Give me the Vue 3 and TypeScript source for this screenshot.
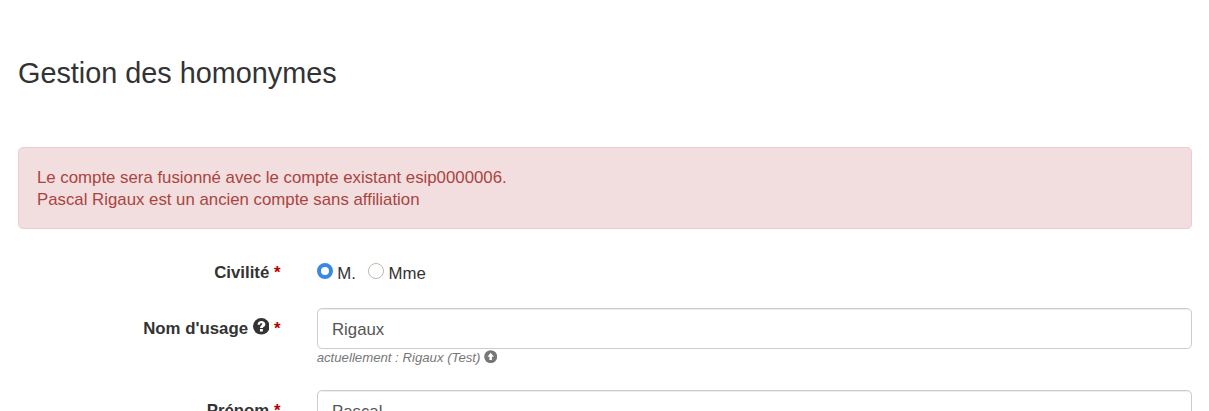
<script setup lang="ts">
import { ref } from 'vue'

const civility = ref<string>('M.')
const civilities: string[] = ['M.', 'Mme']
const lastName = ref<string>('Rigaux')
const firstName = ref<string>('Pascal')
</script>

<template>
  <main class="page">
    <h3 class="title">Gestion des homonymes</h3>

    <div class="alert" role="alert">
      <div>Le compte sera fusionné avec le compte existant esip0000006.</div>
      <div>Pascal Rigaux est un ancien compte sans affiliation</div>
    </div>

    <form class="form" @submit.prevent>
      <div class="row civility">
        <span class="label">Civilité <span class="required">*</span></span>
        <div class="radios">
          <label v-for="c in civilities" :key="c" class="radio">
            <input v-model="civility" type="radio" name="civility" :value="c" />
            <span>{{ c }}</span>
          </label>
        </div>
      </div>

      <div class="row usual-name">
        <label class="label" for="lastName">Nom d'usage
          <svg class="help" viewBox="0 0 16 16" aria-hidden="true">
            <circle cx="8" cy="8" r="8" fill="currentColor" />
            <path d="M4.4 6.5C4.4 4.2 5.9 2.8 8.1 2.8s3.8 1.2 3.8 3.2c0 1.4-.8 2-1.5 2.5-.6.4-.8.6-.8 1.1H6.8c0-1.5.6-2.1 1.3-2.6.6-.4.9-.6.9-1.1 0-.5-.4-.8-1-.8-.8 0-1.2.5-1.2 1.4zM6.7 10.6h2.8V13H6.7z" fill="#fff" />
          </svg>
          <span class="required"> *</span></label>
        <div class="field">
          <input id="lastName" v-model="lastName" class="control" type="text" />
          <div class="hint">
            <span>actuellement : Rigaux (Test)</span>
            <svg class="restore" viewBox="0 0 14 14" aria-hidden="true">
              <circle cx="7" cy="7" r="6.8" fill="currentColor" />
              <path d="M7 2.8 10.4 7H8.3v3.5H5.7V7H3.6z" fill="#fff" />
            </svg>
          </div>
        </div>
      </div>

      <div class="row">
        <label class="label" for="firstName">Prénom <span class="required">*</span></label>
        <div class="field">
          <input id="firstName" v-model="firstName" class="control" type="text" />
        </div>
      </div>
    </form>
  </main>
</template>

<style>
html,
body {
  margin: 0;
  background: #fff;
  overflow: hidden;
}
</style>

<style scoped>
.page {
  box-sizing: border-box;
  height: 411px;
  overflow: hidden;
  padding: 57px 17px 0 18px;
  color: #333;
  font: 16.81px/22px "Liberation Sans", Arial, sans-serif;
}

.title {
  margin: 0 0 58px;
  font-size: 28.82px;
  font-weight: 400;
  line-height: 32px;
}

.alert {
  box-sizing: border-box;
  height: 82px;
  padding: 19px 18px 17px;
  border: 1px solid #ebccd1;
  border-radius: 4.8px;
  background: #f2dede;
  color: #a94442;
}

.form {
  padding-top: 23px;
}

.row {
  display: grid;
  grid-template-columns: 262.5px 1fr;
  column-gap: 36.2px;
  align-items: start;
}

.civility {
  height: 56px;
}

.usual-name {
  height: 82px;
}

.label {
  padding-top: 10px;
  font-weight: 700;
  text-align: right;
  white-space: nowrap;
}

.required {
  color: #b50000;
}

.help {
  width: 16.6px;
  height: 16.6px;
  vertical-align: -0.9px;
}

.radios {
  display: flex;
  gap: 12px;
  padding-top: 11px;
}

.radio {
  display: flex;
  gap: 4.6px;
}

.radio input {
  appearance: none;
  box-sizing: border-box;
  width: 16px;
  height: 16px;
  margin: 0;
  border: 1px solid #c0b8b2;
  border-radius: 50%;
  background: #fff;
}

.radio input:checked {
  border: 4px solid #3b87e5;
}

.control {
  display: block;
  box-sizing: border-box;
  width: 100%;
  height: 41px;
  padding: 9px 14.3px 7px;
  border: 1px solid #ccc;
  border-radius: 4.8px;
  outline: none;
  background: #fff;
  box-shadow: inset 0 1px 1px rgba(0, 0, 0, 0.075);
  color: #555;
  font: inherit;
}

.hint {
  display: flex;
  align-items: flex-start;
  gap: 3.6px;
  color: #777;
  font-size: 13.2px;
  font-style: italic;
  line-height: 18px;
}

.restore {
  width: 13.4px;
  height: 13.4px;
  margin-top: 0.7px;
}
</style>
